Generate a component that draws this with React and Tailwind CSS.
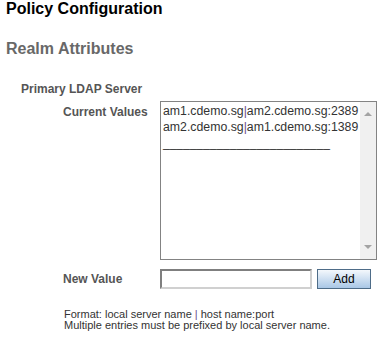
import React from "react";

function FakeScrollbar() {
  return (
    <div className="w-[16px] h-full bg-[#f0f0f0] flex flex-col items-center justify-between py-[9px]">
      <svg width="8" height="5" viewBox="0 0 8 5">
        <path d="M0 5 L4 1 L8 5 Z" fill="#a3a3a3" />
      </svg>
      <svg width="8" height="5" viewBox="0 0 8 5">
        <path d="M0 0 L8 0 L4 4 Z" fill="#a3a3a3" />
      </svg>
    </div>
  );
}

function App() {
  const values = ["am1.cdemo.sg", "am2.cdemo.sg:2389", "am2.cdemo.sg", "am1.cdemo.sg:1389"];

  return (
    <div className="w-[385px] h-[342px] overflow-hidden bg-white font-['Liberation_Sans',Arial,sans-serif]">
      <h1 className="pl-[6px] text-[16px] leading-[18px] font-bold text-black">Policy Configuration</h1>
      <h2 className="mt-[22px] pl-[6px] text-[16px] leading-[18px] font-bold text-[#686868]">Realm Attributes</h2>

      <div className="mt-[24px] pl-[21px] text-[12px] leading-[14px] font-bold text-[#555]">Primary LDAP Server</div>

      <div className="mt-[5px] flex pl-[63px]">
        <div className="w-[97px] pt-[4px] text-[12px] leading-[14px] font-bold text-[#555]">Current Values</div>
        <div className="w-[217px] h-[159px] border border-[#838383] flex">
          <div className="flex-1 pl-[2px] pt-[1px] text-[12.3px] leading-[16px] text-[#333]">
            <div>
              {values[0]}<span className="text-[#6a4d8c]">|</span>{values[1]}
            </div>
            <div>
              {values[2]}<span className="text-[#6a4d8c]">|</span>{values[3]}
            </div>
            <div className="text-[12px]">_________________________</div>
          </div>
          <FakeScrollbar />
        </div>
      </div>

      <div className="mt-[9px] flex items-center pl-[63px]">
        <label className="w-[97px] text-[12px] leading-[14px] font-bold text-[#555]">New Value</label>
        <input
          type="text"
          className="w-[152px] h-[20px] border-2 border-t-[#7f7f7f] border-l-[#7f7f7f] border-b-[#d0d0d0] border-r-[#d0d0d0] outline-none px-[2px] text-[12px]"
        />
        <button className="ml-[5px] w-[54px] h-[20px] border border-[#4e6c88] bg-gradient-to-b from-[#f4f8fc] to-[#a9c7e6] text-[12px] leading-[14px] text-black">
          Add
        </button>
      </div>

      <div className="mt-[20px] pl-[64px] text-[11px] leading-[11px] text-[#333]">
        <div>
          Format: local server name <span className="text-[#6a4d8c]">|</span> host name:port
        </div>
        <div>Multiple entries must be prefixed by local server name.</div>
      </div>
    </div>
  );
}

export default App;
